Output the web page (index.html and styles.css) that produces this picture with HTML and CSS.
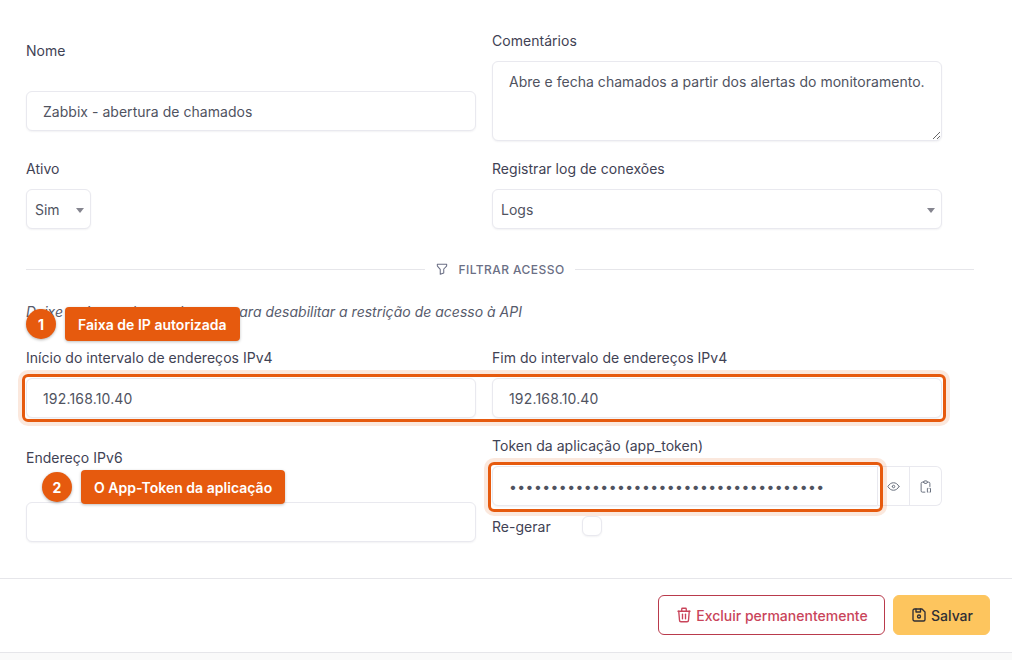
FILE: index.html
```html
<!DOCTYPE html>
<html lang="pt-BR">
<head>
  <meta charset="UTF-8">
  <title>Zabbix - abertura de chamados</title>
  <link rel="stylesheet" href="styles.css">
</head>
<body>
  <div class="page">
    <form class="form">
      <div class="grid">
        <div class="field field-name">
          <label>Nome</label>
          <input class="input" type="text" value="Zabbix - abertura de chamados">
        </div>
        <div class="field">
          <label>Comentários</label>
          <textarea class="input textarea">Abre e fecha chamados a partir dos alertas do monitoramento.</textarea>
        </div>
        <div class="field">
          <label>Ativo</label>
          <div class="select-wrap select-small">
            <select class="select"><option>Sim</option></select>
          </div>
        </div>
        <div class="field">
          <label>Registrar log de conexões</label>
          <div class="select-wrap">
            <select class="select"><option>Logs</option></select>
          </div>
        </div>
      </div>

      <div class="divider">
        <span class="divider-text">
          <svg class="icon" viewBox="0 0 24 24"><path d="M4 4h16v2.172a2 2 0 0 1 -.586 1.414l-4.414 4.414v7l-6 2v-8.5l-4.48 -4.928a2 2 0 0 1 -.52 -1.345v-2.227z"/></svg>
          FILTRAR ACESSO
        </span>
      </div>

      <p class="hint">Deixe os intervalos em branco para desabilitar a restrição de acesso à API</p>

      <div class="grid">
        <div class="field">
          <label>Início do intervalo de endereços IPv4</label>
          <input class="input input-ip" type="text" value="192.168.10.40">
        </div>
        <div class="field">
          <label>Fim do intervalo de endereços IPv4</label>
          <input class="input input-ip" type="text" value="192.168.10.40">
        </div>
        <div class="field field-ipv6">
          <label>Endereço IPv6</label>
          <input class="input" type="text">
        </div>
        <div class="field">
          <label>Token da aplicação (app_token)</label>
          <div class="token">
            <input class="input token-input" type="password" value="abcdefghijklmnopqrstuvwxyz012345678901">
            <button class="token-btn" type="button">
              <svg class="icon" viewBox="0 0 24 24"><path d="M10 12a2 2 0 1 0 4 0a2 2 0 0 0 -4 0"/><path d="M21 12c-2.4 4 -5.4 6 -9 6c-3.6 0 -6.6 -2 -9 -6c2.4 -4 5.4 -6 9 -6c3.6 0 6.6 2 9 6"/></svg>
            </button>
            <button class="token-btn token-btn-last" type="button">
              <svg class="icon" viewBox="0 0 24 24"><path d="M9 5h-2a2 2 0 0 0 -2 2v12a2 2 0 0 0 2 2h4"/><path d="M15 5h2a2 2 0 0 1 2 2v5"/><path d="M9 5a2 2 0 0 1 2 -2h2a2 2 0 0 1 2 2a2 2 0 0 1 -2 2h-2a2 2 0 0 1 -2 -2z"/><path d="M16 15h-1v6h1"/><path d="M19 15h1v6h-1"/></svg>
            </button>
          </div>
          <div class="regen">
            <span>Re-gerar</span>
            <input class="check" type="checkbox">
          </div>
        </div>
      </div>
    </form>

    <div class="footer">
      <button class="btn btn-danger" type="button">
        <svg class="icon" viewBox="0 0 24 24"><path d="M4 7h16"/><path d="M10 11v6"/><path d="M14 11v6"/><path d="M5 7l1 12a2 2 0 0 0 2 2h8a2 2 0 0 0 2 -2l1 -12"/><path d="M9 7v-3a1 1 0 0 1 1 -1h4a1 1 0 0 1 1 1v3"/></svg>
        Excluir permanentemente
      </button>
      <button class="btn btn-save" type="button">
        <svg class="icon" viewBox="0 0 24 24"><path d="M6 4h10l4 4v10a2 2 0 0 1 -2 2h-12a2 2 0 0 1 -2 -2v-12a2 2 0 0 1 2 -2"/><path d="M10 14a2 2 0 1 0 4 0a2 2 0 1 0 -4 0"/><path d="M14 4v4h-6v-4"/></svg>
        Salvar
      </button>
    </div>
    <div class="bottom-band"></div>

    <!-- marcacoes do tutorial por cima do formulario -->
    <div class="mark mark-ip"></div>
    <div class="mark mark-token"></div>
    <div class="callout callout-1"><span class="num">1</span><span class="tip">Faixa de IP autorizada</span></div>
    <div class="callout callout-2"><span class="num">2</span><span class="tip">O App-Token da aplicação</span></div>
  </div>
</body>
</html>
```

FILE: styles.css
```css
* {
  box-sizing: border-box;
}
html, body {
  margin: 0;
  height: 100%;
}
body {
  font-family: Inter, "Liberation Sans", sans-serif;
  font-size: 14px;
  letter-spacing: 0.03px;
  color: #3f4254;
  background: #fff;
  overflow: hidden;
}
.page {
  position: relative;
  height: 660px;
  display: flex;
  flex-direction: column;
}
.form {
  padding: 31px 38px 0 26px;
  height: 578px;
}
.grid {
  display: grid;
  grid-template-columns: 450px 450px;
  column-gap: 16px;
  row-gap: 18px;
}
.field {
  display: flex;
  flex-direction: column;
}
.field label {
  line-height: 20px;
  margin-bottom: 10px;
}
.field-name {
  padding-top: 10px;
}
.field-name label {
  margin-bottom: 30px;
}
.field-ipv6 {
  padding-top: 12px;
}
.field-ipv6 label {
  margin-bottom: 34px;
}
.input {
  display: block;
  width: 100%;
  height: 40px;
  padding: 0 16px;
  font: inherit;
  letter-spacing: inherit;
  color: #50535f;
  background: #fff;
  border: 1px solid #e9e9ef;
  border-radius: 6px;
  box-shadow: 0 1px 2px rgba(30, 30, 60, 0.06);
  outline: none;
}
.input-ip {
  letter-spacing: 0.17px;
}
.textarea {
  height: 80px;
  padding: 10px 16px;
  line-height: 20px;
  resize: vertical;
}
.select-wrap {
  position: relative;
  height: 40px;
}
.select-small {
  width: 65px;
}
.select-wrap::after {
  content: "";
  position: absolute;
  right: 7px;
  top: 19px;
  border-left: 4px solid transparent;
  border-right: 4px solid transparent;
  border-top: 5px solid #85858f;
  pointer-events: none;
}
.select {
  appearance: none;
  width: 100%;
  height: 40px;
  padding: 0 8px;
  font: inherit;
  color: #50535f;
  background: #fff;
  border: 1px solid #e9e9ef;
  border-radius: 6px;
  box-shadow: 0 1px 2px rgba(30, 30, 60, 0.06);
}
.divider {
  display: flex;
  align-items: center;
  gap: 10px;
  width: 948px;
  height: 20px;
  margin-top: 30px;
  font-size: 12px;
  font-weight: 500;
  letter-spacing: 0.45px;
  color: #6b6f85;
}
.divider::before,
.divider::after {
  content: "";
  flex: 1;
  height: 1px;
  background: #e6e6ea;
}
.divider-text {
  display: flex;
  align-items: center;
  gap: 9px;
}
.divider-text .icon {
  width: 14px;
  height: 14px;
  stroke-width: 1.8;
}
.hint {
  margin: 23px 0 26px;
  line-height: 20px;
  font-style: italic;
  letter-spacing: 0;
  color: #575b6c;
}
.icon {
  width: 18px;
  height: 18px;
  fill: none;
  stroke: currentColor;
  stroke-width: 1.8;
  stroke-linecap: round;
  stroke-linejoin: round;
  flex: none;
}
.token {
  display: flex;
}
.token-input {
  flex: 1;
  min-width: 0;
  border-radius: 6px 0 0 6px;
  letter-spacing: 0.43px;
}
.token-btn {
  display: flex;
  align-items: center;
  justify-content: center;
  width: 32px;
  height: 40px;
  padding: 0;
  color: #6b7280;
  background: #fff;
  border: 1px solid #e9e9ef;
  border-left: 0;
}
.token-btn .icon {
  stroke-width: 1.6;
  width: 15px;
  height: 15px;
}
.token-btn-last {
  border-radius: 0 6px 6px 0;
}
.regen {
  display: flex;
  align-items: center;
  height: 20px;
  margin-top: 10px;
}
.regen span {
  width: 90px;
}
.check {
  appearance: none;
  width: 20px;
  height: 20px;
  margin: 0;
  background: #fff;
  border: 1px solid #e9e9ef;
  border-radius: 6px;
  box-shadow: 0 1px 2px rgba(30, 30, 60, 0.06);
}
.footer {
  display: flex;
  justify-content: flex-end;
  gap: 8px;
  height: 74px;
  padding: 16px 22px 0 0;
  border-top: 1px solid #e6e6ea;
}
.btn {
  display: flex;
  align-items: center;
  justify-content: center;
  gap: 3px;
  height: 40px;
  padding: 0;
  font: inherit;
  font-weight: 500;
  border-radius: 6px;
}
.btn-danger {
  width: 227px;
  color: #c9445a;
  background: #fff;
  border: 1px solid #b93a4c;
}
.btn-save {
  width: 97px;
  color: #2f2f35;
  background: #fdc55e;
  border: 1px solid #fdc55e;
}
.bottom-band {
  flex: 1;
  background: #fafafa;
  border-top: 1px solid #e6e6ea;
}
.mark {
  position: absolute;
  border: 3px solid #e65a0e;
  border-radius: 6px;
  box-shadow: 0 0 0 4px rgba(230, 90, 14, 0.14);
}
.mark-ip {
  left: 22px;
  top: 374px;
  width: 924px;
  height: 48px;
}
.mark-token {
  left: 488px;
  top: 462px;
  width: 395px;
  height: 50px;
}
.callout {
  position: absolute;
  display: flex;
  align-items: center;
  gap: 9px;
  color: #fff;
  font-weight: 600;
  letter-spacing: 0.02px;
}
.callout-1 {
  left: 26px;
  top: 307px;
}
.callout-2 {
  left: 42px;
  top: 470px;
}
.num {
  display: flex;
  align-items: center;
  justify-content: center;
  width: 30px;
  height: 30px;
  border-radius: 50%;
  font-weight: 700;
  background: #e65a0e;
  box-shadow: 0 1px 3px rgba(0, 0, 0, 0.3);
}
.tip {
  display: flex;
  align-items: center;
  height: 34px;
  padding: 0 13px;
  border-radius: 4px;
  background: #e65a0e;
  box-shadow: 0 1px 3px rgba(0, 0, 0, 0.25);
}
```
